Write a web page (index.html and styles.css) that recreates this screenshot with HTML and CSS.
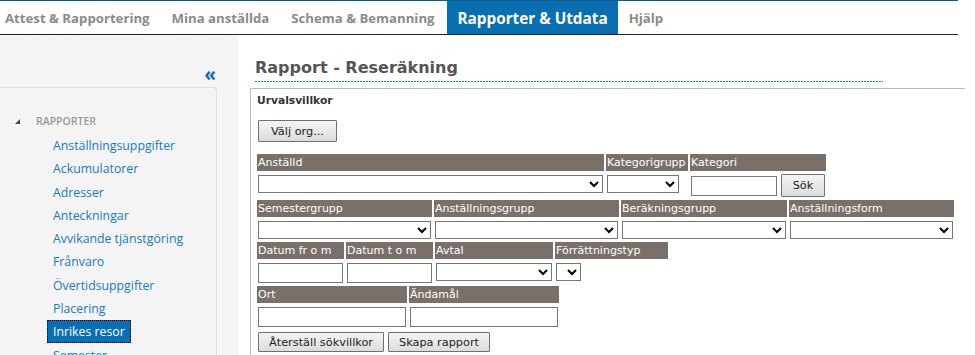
FILE: index.html
```html
<!DOCTYPE html>
<html lang="sv">
<head>
    <meta charset="UTF-8">
    <title>Rapport - Reseräkning</title>
    <link rel="stylesheet" href="styles.css">
</head>
<body>
    <div class="topnav">
        <a class="tab">Attest &amp; Rapportering</a>
        <a class="tab">Mina anställda</a>
        <a class="tab">Schema &amp; Bemanning</a>
        <a class="tab active">Rapporter &amp; Utdata</a>
        <a class="tab">Hjälp</a>
    </div>

    <div class="layout">
        <div class="sidebar">
            <div class="collapse">&laquo;</div>
            <div class="panel">
                <div class="group"><span class="tri"></span>RAPPORTER</div>
                <ul class="links">
                    <li><a>Anställningsuppgifter</a></li>
                    <li><a>Ackumulatorer</a></li>
                    <li><a>Adresser</a></li>
                    <li><a>Anteckningar</a></li>
                    <li><a>Avvikande tjänstgöring</a></li>
                    <li><a>Frånvaro</a></li>
                    <li><a>Övertidsuppgifter</a></li>
                    <li><a>Placering</a></li>
                    <li><a class="current">Inrikes resor</a></li>
                    <li><a>Semester</a></li>
                </ul>
            </div>
        </div>

        <div class="content">
            <h1 class="title">Rapport - Reseräkning</h1>
            <div class="box">
                <div class="boxhead">Urvalsvillkor</div>
                <button class="btn org">Välj org...</button>

                <div class="frow">
                    <div class="field w-anst">
                        <div class="lbl">Anställd</div>
                        <select class="full"></select>
                    </div>
                    <div class="field w-kgrp">
                        <div class="lbl">Kategorigrupp</div>
                        <select class="kgrp"></select>
                    </div>
                    <div class="field w-kat">
                        <div class="lbl">Kategori</div>
                        <div class="pair">
                            <input type="text" class="kat">
                            <button class="btn sok">Sök</button>
                        </div>
                    </div>
                </div>

                <div class="frow">
                    <div class="field w-sem">
                        <div class="lbl">Semestergrupp</div>
                        <select class="full"></select>
                    </div>
                    <div class="field w-agrp">
                        <div class="lbl">Anställningsgrupp</div>
                        <select class="full"></select>
                    </div>
                    <div class="field w-ber">
                        <div class="lbl">Beräkningsgrupp</div>
                        <select class="full"></select>
                    </div>
                    <div class="field w-form">
                        <div class="lbl">Anställningsform</div>
                        <select class="full"></select>
                    </div>
                </div>

                <div class="frow">
                    <div class="field w-dat">
                        <div class="lbl">Datum fr o m</div>
                        <input type="text" class="full">
                    </div>
                    <div class="field w-dat">
                        <div class="lbl">Datum t o m</div>
                        <input type="text" class="full">
                    </div>
                    <div class="field w-avt">
                        <div class="lbl">Avtal</div>
                        <select class="full"></select>
                    </div>
                    <div class="field w-forr">
                        <div class="lbl">Förrättningstyp</div>
                        <select class="tiny"></select>
                    </div>
                </div>

                <div class="frow">
                    <div class="field w-ort">
                        <div class="lbl">Ort</div>
                        <input type="text" class="full">
                    </div>
                    <div class="field w-ort">
                        <div class="lbl">Ändamål</div>
                        <input type="text" class="full">
                    </div>
                </div>

                <div class="actions">
                    <button class="btn">Återställ sökvillkor</button>
                    <button class="btn">Skapa rapport</button>
                </div>
            </div>
        </div>
    </div>
</body>
</html>
```

FILE: styles.css
```css
html, body
{
    margin: 0;
    padding: 0;
    height: 100%;
    overflow: hidden;
    background: #fff;
}

/* toppmeny */
.topnav
{
    display: flex;
    width: 958px;
    height: 33px;
    border-top: 1px solid #0b5a8a;
    border-bottom: 1px solid #222;
    font-family: "Open Sans", sans-serif;
    font-weight: bold;
    font-size: 13.2px;
}
.tab
{
    display: flex;
    align-items: center;
    padding: 0 11px;
    color: #8a8a8a;
}
.tab:first-child
{
    padding-left: 5px;
}
.tab.active
{
    background: #0a6fb0;
    color: #fff;
    font-size: 15.3px;
    padding: 0 10px 0 11px;
    margin-left: 1px;
}

.layout
{
    display: flex;
    height: 320px;
}

/* vänsterspalt */
.sidebar
{
    width: 238px;
    flex: none;
    background: #f4f4f4;
    font-family: "Open Sans", sans-serif;
}
.collapse
{
    text-align: right;
    padding: 32px 22px 0 0;
    height: 20px;
    color: #0a6fb0;
    font-weight: bold;
    font-size: 19px;
    line-height: 14px;
}
.panel
{
    margin-right: 21px;
    height: 300px;
    border-top: 1px solid #dedede;
    border-right: 1px solid #dedede;
    border-top-right-radius: 4px;
}
.group
{
    margin-top: 26px;
    padding-left: 15px;
    font-size: 10.5px;
    font-weight: 600;
    color: #999;
    display: flex;
    align-items: center;
}
.tri
{
    width: 0;
    height: 0;
    border-left: 5px solid transparent;
    border-bottom: 5px solid #444;
    margin-right: 16px;
}
.links
{
    list-style: none;
    margin: 6px 0 0 0;
    padding: 0 0 0 47px;
    font-size: 12.3px;
}
.links li
{
    height: 23.3px;
    line-height: 23px;
}
.links a
{
    color: #1a78bd;
    padding: 0 6px;
}
.links a.current
{
    display: inline-block;
    background: #0a6fb0;
    color: #fff;
    height: 21px;
    line-height: 21px;
    border: 1px dotted #000;
    padding: 0 5px;
}

/* innehåll */
.content
{
    flex: 1;
    padding-left: 12px;
    font-family: "DejaVu Sans", Verdana, sans-serif;
}
.title
{
    margin: 23px 92px 0 5px;
    padding-bottom: 5px;
    font-size: 16px;
    font-weight: bold;
    color: #555;
    background: repeating-linear-gradient(to right, #1a7ab0 0 2px, transparent 2px 3px) left bottom / 100% 1px no-repeat;
}
.box
{
    margin: 6px 10px 0 0;
    border-top: 1px solid #bbb;
    border-left: 1px solid #bbb;
    padding: 5px 0 0 6px;
    height: 300px;
}
.boxhead
{
    font-size: 10.7px;
    font-weight: bold;
    color: #333;
}
.btn
{
    font-family: "DejaVu Sans", Verdana, sans-serif;
    font-size: 11.3px;
    color: #222;
    border: 1px solid #707070;
    border-radius: 1px;
    background: linear-gradient(#f4f4f4, #dcdcdc);
    height: 22px;
    padding: 0 9px;
}
.org
{
    margin: 13px 0 12px 1px;
    width: 79px;
    padding: 0;
}

.frow
{
    display: flex;
    gap: 2px;
    margin-bottom: 3px;
}
.field
{
    display: flex;
    flex-direction: column;
}
.lbl
{
    background: #7a706a;
    color: #fff;
    font-size: 11px;
    height: 17px;
    line-height: 17px;
    padding-left: 1px;
    margin-bottom: 4px;
    white-space: nowrap;
    overflow: hidden;
}
select, input[type=text]
{
    box-sizing: border-box;
    height: 18px;
    border: 1px solid #767676;
    background: #fff;
    margin: 0 0 0 1px;
    border-radius: 0;
    font-size: 11px;
}
input[type=text]
{
    height: 20px;
}
.full
{
    width: calc(100% - 2px);
}
.w-anst { width: 347px; }
.w-kgrp { width: 82px; }
.w-kat { width: 136px; }
.kgrp { width: 72px; }
.pair
{
    display: flex;
    align-items: center;
    gap: 4px;
    margin-top: -1px;
}
.kat { width: 86px; }
.sok
{
    width: 44px;
    height: 23px;
    padding: 0;
}
.w-sem { width: 175px; }
.w-agrp { width: 185px; }
.w-ber { width: 166px; }
.w-form { width: 165px; }
.w-dat { width: 87px; }
.w-avt { width: 118px; }
.w-forr { width: 113px; }
.tiny { width: 25px; }
.w-ort { width: 150px; }

.actions
{
    display: flex;
    gap: 4px;
    margin-top: 5px;
    padding-left: 1px;
}
.actions .btn
{
    height: 20px;
    padding: 0 10px;
}
```
